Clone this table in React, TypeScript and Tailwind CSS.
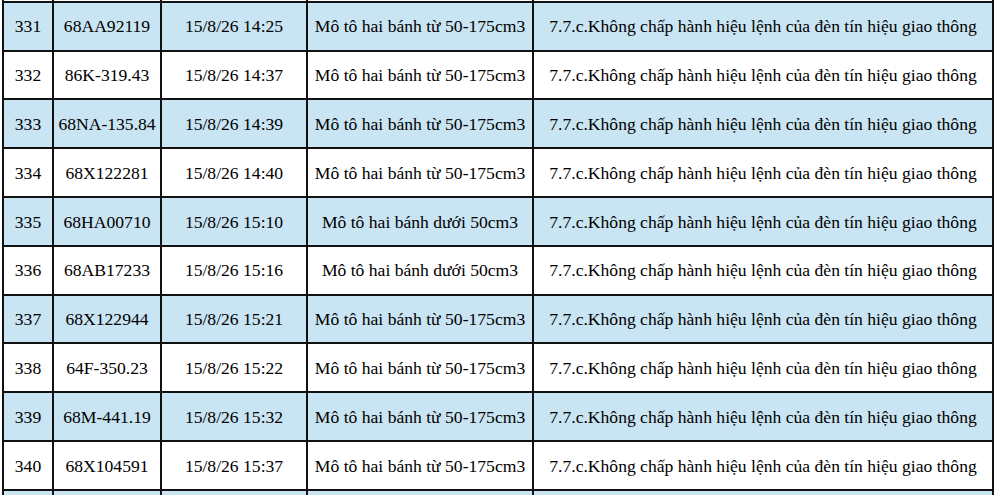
import React from "react";

const rows: [string, string, string, string, string][] = [
  ["331", "68AA92119", "15/8/26 14:25", "Mô tô hai bánh từ 50-175cm3", "7.7.c.Không chấp hành hiệu lệnh của đèn tín hiệu giao thông"],
  ["332", "86K-319.43", "15/8/26 14:37", "Mô tô hai bánh từ 50-175cm3", "7.7.c.Không chấp hành hiệu lệnh của đèn tín hiệu giao thông"],
  ["333", "68NA-135.84", "15/8/26 14:39", "Mô tô hai bánh từ 50-175cm3", "7.7.c.Không chấp hành hiệu lệnh của đèn tín hiệu giao thông"],
  ["334", "68X122281", "15/8/26 14:40", "Mô tô hai bánh từ 50-175cm3", "7.7.c.Không chấp hành hiệu lệnh của đèn tín hiệu giao thông"],
  ["335", "68HA00710", "15/8/26 15:10", "Mô tô hai bánh dưới 50cm3", "7.7.c.Không chấp hành hiệu lệnh của đèn tín hiệu giao thông"],
  ["336", "68AB17233", "15/8/26 15:16", "Mô tô hai bánh dưới 50cm3", "7.7.c.Không chấp hành hiệu lệnh của đèn tín hiệu giao thông"],
  ["337", "68X122944", "15/8/26 15:21", "Mô tô hai bánh từ 50-175cm3", "7.7.c.Không chấp hành hiệu lệnh của đèn tín hiệu giao thông"],
  ["338", "64F-350.23", "15/8/26 15:22", "Mô tô hai bánh từ 50-175cm3", "7.7.c.Không chấp hành hiệu lệnh của đèn tín hiệu giao thông"],
  ["339", "68M-441.19", "15/8/26 15:32", "Mô tô hai bánh từ 50-175cm3", "7.7.c.Không chấp hành hiệu lệnh của đèn tín hiệu giao thông"],
  ["340", "68X104591", "15/8/26 15:37", "Mô tô hai bánh từ 50-175cm3", "7.7.c.Không chấp hành hiệu lệnh của đèn tín hiệu giao thông"],
];

const empty: [string, string, string, string, string] = ["", "", "", "", ""];

export default function App() {
  const all: { cells: [string, string, string, string, string]; blue: boolean }[] = [
    { cells: empty, blue: false },
    ...rows.map((r, i) => ({ cells: r, blue: i % 2 === 0 })),
    { cells: empty, blue: true },
  ];
  return (
    <div
      className="w-[998px] h-[495px] overflow-hidden bg-white text-black text-[17.6px] leading-none"
      style={{ fontFamily: '"Liberation Serif", "Times New Roman", serif' }}
    >
      <div className="ml-[2px] mt-[-48px] w-[992px] grid grid-cols-[48px_106px_144px_224px_458px] auto-rows-[46.8px] gap-[2px] p-[2px] bg-[#111]">
        {all.map((row, ri) =>
          row.cells.map((c, ci) => (
            <div
              key={`${ri}-${ci}`}
              className={`flex items-center justify-center whitespace-nowrap pt-[2px] ${row.blue ? "bg-[#c9e4f2]" : "bg-white"}`}
            >
              {c}
            </div>
          ))
        )}
      </div>
    </div>
  );
}
